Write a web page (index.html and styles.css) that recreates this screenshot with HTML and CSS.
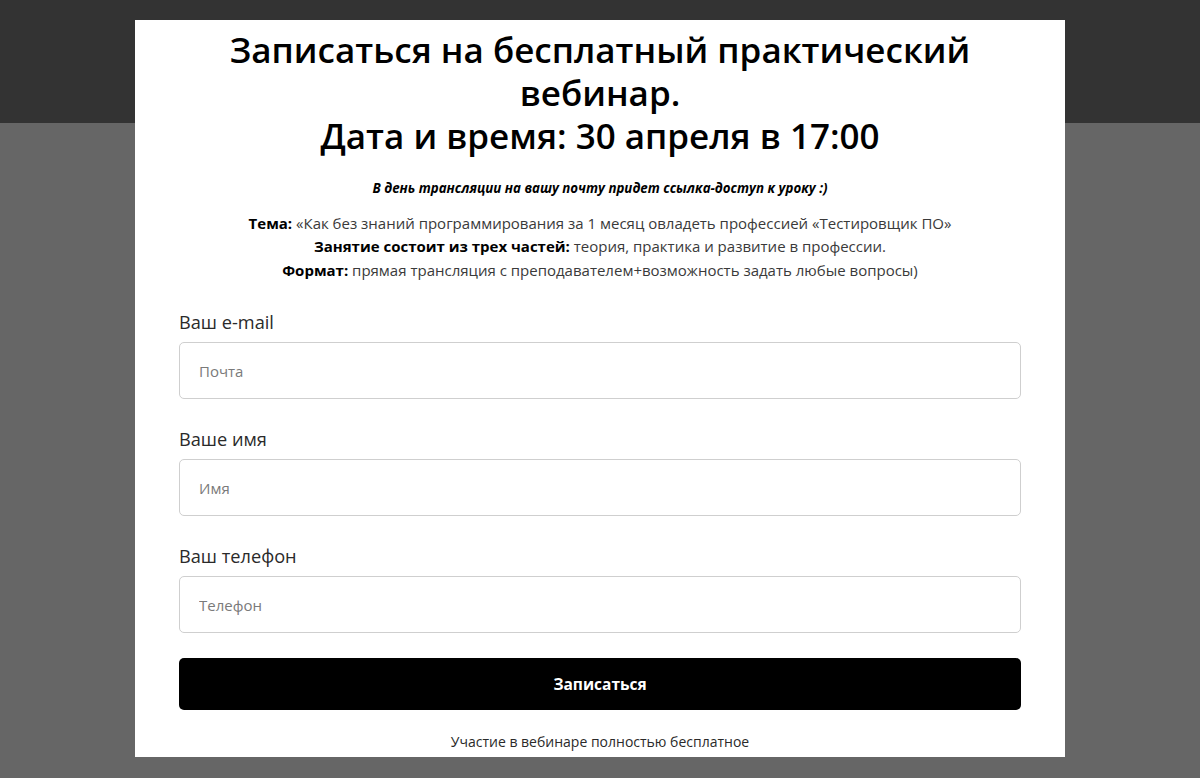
FILE: index.html
```html
<!DOCTYPE html>
<html lang="ru">
<head>
<meta charset="utf-8">
<title>Записаться на вебинар</title>
<link rel="stylesheet" href="styles.css">
</head>
<body>
<div class="modal">
  <h1 class="title">Записаться на бесплатный практический вебинар.<br>Дата и время: 30 апреля в 17:00</h1>
  <p class="note">В день трансляции на вашу почту придет ссылка-доступ к уроку :)</p>
  <div class="desc">
    <p><b>Тема:</b> «Как без знаний программирования за 1 месяц овладеть профессией «Тестировщик ПО»</p>
    <p><b>Занятие состоит из трех частей:</b> теория, практика и развитие в профессии.</p>
    <p><b>Формат:</b> прямая трансляция с преподавателем+возможность задать любые вопросы)</p>
  </div>
  <form class="form">
    <label class="field">
      <span class="label">Ваш e-mail</span>
      <input class="input" type="text" placeholder="Почта">
    </label>
    <label class="field">
      <span class="label">Ваше имя</span>
      <input class="input" type="text" placeholder="Имя">
    </label>
    <label class="field">
      <span class="label">Ваш телефон</span>
      <input class="input" type="text" placeholder="Телефон">
    </label>
    <button class="btn" type="button">Записаться</button>
  </form>
  <p class="free">Участие в вебинаре полностью бесплатное</p>
</div>
</body>
</html>
```
FILE: styles.css
```css
html, body {
  margin: 0;
  padding: 0;
}
body {
  height: 778px;
  overflow: hidden;
  background: linear-gradient(#333333 0, #333333 123px, #666666 123px, #666666 100%);
  font-family: "Open Sans", "Noto Sans", sans-serif;
}
.modal {
  box-sizing: border-box;
  width: 930px;
  height: 737px;
  margin: 20px auto 0;
  background: #ffffff;
  padding: 8px 44px 0;
  overflow: hidden;
  text-align: center;
}
.title {
  margin: 0;
  font-size: 35px;
  line-height: 43.2px;
  font-weight: 600;
  color: #000;
}
.note {
  margin: 20px 0 0;
  font-size: 13.3px;
  line-height: 20px;
  font-weight: 700;
  font-style: italic;
  color: #000;
}
.desc {
  margin-top: 14px;
  font-size: 15px;
  line-height: 23.5px;
  font-weight: 400;
  color: #3a3a3a;
}
.desc p {
  margin: 0;
}
.desc b {
  color: #000;
  font-weight: 700;
}
.form {
  margin-top: 28px;
  display: flex;
  flex-direction: column;
  gap: 28px;
  text-align: left;
}
.field {
  display: flex;
  flex-direction: column;
  gap: 8px;
}
.label {
  font-size: 18.2px;
  line-height: 24px;
  font-weight: 400;
  color: #2a2a2a;
}
.input {
  box-sizing: border-box;
  height: 57px;
  width: 100%;
  border: 1px solid #cfcfcf;
  border-radius: 5px;
  padding: 0 19px;
  font-family: "Open Sans", sans-serif;
  font-size: 15px;
  font-weight: 400;
  color: #000;
  background: #fff;
  outline: none;
}
.input::placeholder {
  color: #7a7a7a;
}
.btn {
  margin-top: -3px;
  height: 52px;
  width: 100%;
  border: 0;
  border-radius: 5px;
  background: #000;
  color: #fff;
  font-family: "Open Sans", sans-serif;
  font-size: 15.5px;
  font-weight: 700;
}
.free {
  margin: 22px 0 0;
  font-size: 14px;
  line-height: 20px;
  font-weight: 400;
  color: #2a2a2a;
}
```
